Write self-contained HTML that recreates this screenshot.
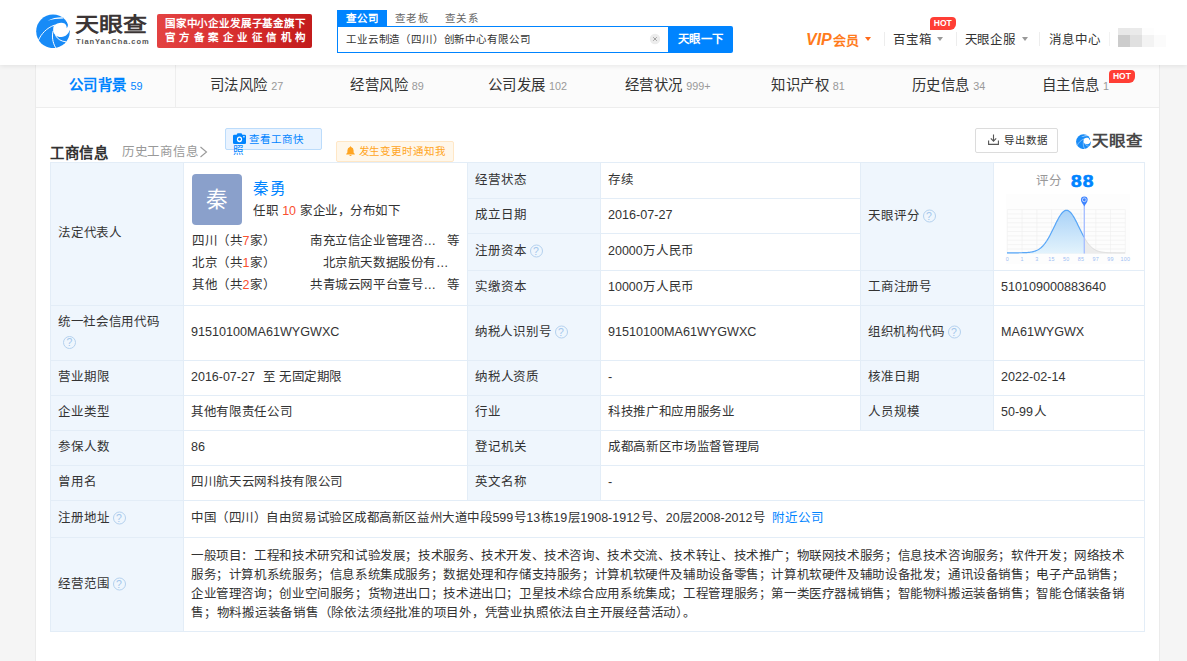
<!DOCTYPE html>
<html lang="zh-CN"><head>
<meta charset="utf-8">
<title>天眼查</title>
<style>
*{box-sizing:border-box;margin:0;padding:0}
html,body{width:1187px;height:661px;overflow:hidden}
body{background:#f5f5f5;font-family:"Liberation Sans",sans-serif;font-size:12.6px;color:#333;position:relative;line-height:1}
.abs,.abs>*{position:absolute}
.t{position:absolute;white-space:nowrap;line-height:1;transform:translateY(-50%)}
.j{display:inline-block;white-space:nowrap;text-align:justify;text-align-last:justify;vertical-align:baseline}
.blue{color:#0084ff}
.red{color:#f9502f}
.g9{color:#999}
/* header */
#hdr{position:absolute;left:0;top:0;width:1187px;height:65px;background:#fff;box-shadow:0 1px 5px rgba(0,0,0,.085);z-index:5}
#hdr>*{position:absolute}
.badge{left:157px;top:14px;width:155px;height:34px;border-radius:2px;background:linear-gradient(100deg,#e44343 0%,#d62c2c 55%,#c21b1b 100%);color:#fff;font-weight:bold}
.badge>span{position:absolute;left:8px}
.stab{top:10px;height:16px;font-size:10.8px;line-height:16px;color:#666}
.sep{top:32px;width:1px;height:14px;background:#ededed}
.nav{font-size:12.6px;color:#333}
.tri{width:0;height:0;border-left:3.5px solid transparent;border-right:3.5px solid transparent;border-top:4.5px solid #999}
.hot{background:#ff3e35;color:#fff;font-weight:bold;font-size:8.5px;line-height:12.5px;text-align:center;border-radius:4px 4px 6px 0;letter-spacing:0}
/* main */
#main{position:absolute;left:35px;top:65px;width:1125px;height:596px;background:#fff;border-left:1px solid #ebebeb;border-right:1px solid #ebebeb}
#tabs{position:absolute;left:36px;top:65px;width:1123px;height:43px;background:#fbfbfb;border-bottom:1px solid #ededed;display:flex}
.tab{flex:0 0 12.5%;height:42px;display:flex;align-items:center;justify-content:center;font-size:14.4px;color:#333;white-space:nowrap;position:relative;padding-bottom:1px}
.tab .n{font-size:10.8px;color:#999;margin-left:4px;position:relative;top:1px}
.tab.on{color:#0084ff;font-weight:bold;border-right:1px solid #eee}
.tab.on .n{color:#0084ff;font-weight:normal}

/* section header */
.btn{position:absolute;border-radius:2px}
/* table */
#tb{position:absolute;left:50px;top:162px;width:1095px;height:470px;border-right:1px solid #e3edf7;border-bottom:1px solid #e3edf7}
.c{position:absolute;border-left:1px solid #e3edf7;border-top:1px solid #e3edf7;background:#fff}
.c.l{background:#eff6fd}
.c>.t{left:7px;top:calc(50% - 1px)}
.q{display:inline-block;width:13px;height:13px;border:1px solid #b4d1ee;border-radius:50%;color:#a3c6ec;font-size:10.5px;line-height:11px;text-align:center;vertical-align:top;margin-left:4px;position:relative;top:0}
</style>
</head>
<body>
<!-- ================= HEADER ================= -->
<div id="hdr">
  <svg style="left:36px;top:14px" width="34" height="34" viewBox="0 0 34 34">
    <circle cx="17" cy="17.3" r="16.8" fill="#188bf7"></circle>
    <path d="M17.9 11.6C20.5 9.2 25.6 7.7 28.6 9.5C30.1 10.6 30.9 12.3 30.6 14.2C32.3 12.6 32.4 9.8 30.4 7.2L36 5.5V16.6L33.6 16.2C32.6 19.7 29.8 22.7 25.4 23C22.9 23.1 21 22.5 19.8 21.5C18.4 20.2 17.5 18.8 17.3 17.3C17 15 17.2 13 17.9 11.6Z" fill="#fff"></path>
    <path d="M11.6 6.7C16 4.3 21 3.2 26.6 3.3L27.2 4.5C21.4 4.5 16.2 5.3 11.6 6.7Z" fill="#fff"></path>
    <path d="M2.5 26.2C5.2 19.8 10.6 14 18.2 11.2" fill="none" stroke="#fff" stroke-width=".95" stroke-linecap="round"></path>
    <path d="M17.2 16.8C15.6 22 16.6 28.6 19.7 33.8" fill="none" stroke="#fff" stroke-width="1"></path>
    <path d="M19.4 21.3C21.4 25.2 25.4 27.4 30.4 27.9" fill="none" stroke="#fff" stroke-width=".95"></path>
  </svg>
  <div class="t" style="left:75px;top:24.5px;font-size:24px;font-weight:bold;color:#3b3535;transform:translateY(-50%) scaleY(.86)"><span class="j" style="width: 72px;">天眼查</span></div>
  <div class="t" style="left:76px;top:42px;font-size:7.5px;font-weight:bold;color:#555;letter-spacing:.95px">TianYanCha.com</div>
  <div class="badge">
    <span class="t" style="top:9.5px;font-size:10.8px"><span class="j" style="width: 140px; font-size: 10.49px;">国家中小企业发展子基金旗下</span></span>
    <span class="t" style="top:24px;font-size:10.8px"><span class="j" style="width: 140px; font-size: 10.49px;">官方备案企业征信机构</span></span>
  </div>
  <!-- search -->
  <div class="stab" style="left:337px;width:50px;background:#0084ff;color:#fff;font-weight:bold;text-align:center"><span class="j" style="width: 32.5px; font-size: 10.49px;">查公司</span></div>
  <div class="stab" style="left:395px"><span class="j" style="width: 32.5px; font-size: 10.49px;">查老板</span></div>
  <div class="stab" style="left:445px"><span class="j" style="width: 32.5px; font-size: 10.49px;">查关系</span></div>
  <div style="left:337px;top:26px;width:332px;height:27px;border:1px solid #0084ff;background:#fff"></div>
  <div class="t" style="left:346px;top:39.5px;font-size:10.8px;color:#333"><span class="j" style="width: 183.5px; font-size: 10.49px;">工业云制造（四川）创新中心有限公司</span></div>
  <svg style="left:649px;top:33px" width="12" height="12" viewBox="0 0 12 12"><circle cx="6" cy="6" r="5.2" fill="#ececec"></circle><path d="M4.2 4.2L7.8 7.8M7.8 4.2L4.2 7.8" stroke="#999" stroke-width=".9"></path></svg>
  <div style="left:668px;top:26px;width:65px;height:27px;background:#0084ff;border-radius:0 2px 2px 0"></div>
  <div class="t" style="left:677.5px;top:39.5px;font-size:11.4px;color:#fff;font-weight:bold"><span class="j" style="width: 45.5px;">天眼一下</span></div>
  <!-- right nav -->
  <div class="t" style="left:806px;top:39.5px;color:#ff7b1c;font-weight:bold;font-size:12.6px"><i style="font-size:16px;margin-right:1.5px">VIP</i><span class="j" style="font-size: 13px; width: 26px;">会员</span></div>
  <div class="tri" style="left:865px;top:37px;border-top-color:#ff6a1a"></div>
  <div class="sep" style="left:884px"></div>
  <div class="t nav" style="left:893px;top:39.5px"><span class="j" style="width: 37.75px; font-size: 12.49px;">百宝箱</span></div>
  <div class="tri" style="left:937px;top:37px"></div>
  <div class="hot" style="left:930px;top:17px;width:25.5px;height:12.5px">HOT</div>
  <div class="sep" style="left:956px"></div>
  <div class="t nav" style="left:964.5px;top:39.5px"><span class="j" style="width: 50.5px; font-size: 12.49px;">天眼企服</span></div>
  <div class="tri" style="left:1021.5px;top:37px"></div>
  <div class="sep" style="left:1039px"></div>
  <div class="t nav" style="left:1049px;top:39.5px"><span class="j" style="width: 50.5px; font-size: 12.49px;">消息中心</span></div>
  <div class="sep" style="left:1109px;background:#f2f2f2"></div>
  <!-- blurred avatar mosaic -->
  <div style="left:1118px;top:28px;width:12px;height:7px;background:#e8e8e8"></div>
  <div style="left:1130px;top:28px;width:12px;height:7px;background:#eaeaea"></div>
  <div style="left:1142px;top:28px;width:12px;height:7px;background:#fdfdfd"></div>
  <div style="left:1118px;top:35px;width:12px;height:12px;background:#cccccc"></div>
  <div style="left:1130px;top:35px;width:12px;height:12px;background:#e0e0e0"></div>
  <div style="left:1142px;top:35px;width:12px;height:12px;background:#f3f3f3"></div>
  <div style="left:1154px;top:35px;width:12px;height:12px;background:#fbfbfb"></div>
</div>

<!-- ================= MAIN ================= -->
<div id="main"></div>
<div id="tabs">
  <div class="tab on"><span class="j" style="width: 57.5px;">公司背景</span><span class="n">59</span></div>
  <div class="tab"><span class="j" style="width: 57.5px;">司法风险</span><span class="n">27</span></div>
  <div class="tab"><span class="j" style="width: 57.5px;">经营风险</span><span class="n">89</span></div>
  <div class="tab"><span class="j" style="width: 57.5px;">公司发展</span><span class="n">102</span></div>
  <div class="tab"><span class="j" style="width: 57.5px;">经营状况</span><span class="n">999+</span></div>
  <div class="tab"><span class="j" style="width: 57.5px;">知识产权</span><span class="n">81</span></div>
  <div class="tab"><span class="j" style="width: 57.5px;">历史信息</span><span class="n">34</span></div>
  <div class="tab" style="padding-right:27px"><span class="j" style="width: 57.5px;">自主信息</span><span class="n">1</span><div class="hot" style="position:absolute;left:90px;top:5px;width:26.5px;height:12.5px">HOT</div></div>
</div>


<!-- ================= SECTION HEADER ================= -->
<div class="t" style="left:50px;top:152.5px;font-size:14.4px;font-weight:bold;color:#333"><span class="j" style="width: 57.5px;">工商信息</span></div>
<div class="t g9" style="left:122px;top:152px;font-size:12.6px"><span class="j" style="width: 75.5px; font-size: 12.49px;">历史工商信息</span></div>
<svg style="position:absolute;left:199px;top:146px" width="9" height="12" viewBox="0 0 9 12"><path d="M1.5 1L7.5 6L1.5 11" fill="none" stroke="#999" stroke-width="1.1"></path></svg>
<div class="btn" style="left:225px;top:128px;width:97px;height:22px;background:#e9f3ff;border:1px solid #bcdcfb"></div>
<svg style="position:absolute;left:233px;top:133px" width="13" height="11" viewBox="0 0 13 10" preserveAspectRatio="none"><path d="M1.2 1.6H3.6L4.5 0.3H8.5L9.4 1.6H11.8Q13 1.6 13 2.8V8.8Q13 10 11.8 10H1.2Q0 10 0 8.8V2.8Q0 1.6 1.2 1.6Z" fill="#0084ff"></path><circle cx="6.5" cy="5.7" r="2.6" fill="#fff"></circle><circle cx="6.5" cy="5.7" r="1.3" fill="#0084ff"></circle><rect x="10.2" y="2.8" width="1.4" height="1.2" fill="#fff"></rect></svg>
<div class="t blue" style="left:249px;top:140px;font-size:10.8px"><span class="j" style="width: 54px; font-size: 10.49px;">查看工商快</span></div>
<div class="t blue" style="left:233px;top:151.3px;font-size:10.8px"><span class="j" style="width: 10.75px; font-size: 10.49px;">照</span></div>
<div class="btn" style="left:336px;top:141px;width:118px;height:21px;background:#fff7ea;border:1px solid #ffe7c6"></div>
<svg style="position:absolute;left:345.5px;top:146px" width="9" height="10" viewBox="0 0 9 10"><path d="M4.5 0.2Q5.1 0.2 5.1 0.9Q7.6 1.5 7.6 4.4V6.6L8.8 7.9V8.4H0.2V7.9L1.4 6.6V4.4Q1.4 1.5 3.9 0.9Q3.9 0.2 4.5 0.2Z" fill="#ffa522"></path><path d="M3.3 8.9H5.7Q5.5 10 4.5 10Q3.5 10 3.3 8.9Z" fill="#ffa522"></path></svg>
<div class="t" style="left:358.5px;top:151.5px;font-size:10.8px;color:#ffa522"><span class="j" style="width: 86.5px; font-size: 10.49px;">发生变更时通知我</span></div>
<div class="btn" style="left:975px;top:128px;width:83px;height:25px;background:#fff;border:1px solid #dcdcdc"></div>
<svg style="position:absolute;left:988px;top:134px" width="11" height="11" viewBox="0 0 11 11"><path d="M5.5 0.5V7M2.8 4.4L5.5 7.1L8.2 4.4" fill="none" stroke="#555" stroke-width="1.1"></path><path d="M0.6 6.5V10.4H10.4V6.5" fill="none" stroke="#555" stroke-width="1.1"></path></svg>
<div class="t" style="left:1003.5px;top:140.5px;font-size:10.8px;color:#333"><span class="j" style="width: 43.25px; font-size: 10.49px;">导出数据</span></div>
<svg style="position:absolute;left:1076px;top:133.5px" width="15" height="15" viewBox="0 0 34 34">
    <circle cx="17" cy="17.3" r="16.8" fill="#188bf7"></circle>
    <path d="M17.9 11.6C20.5 9.2 25.6 7.7 28.6 9.5C30.1 10.6 30.9 12.3 30.6 14.2C32.3 12.6 32.4 9.8 30.4 7.2L36 5.5V16.6L33.6 16.2C32.6 19.7 29.8 22.7 25.4 23C22.9 23.1 21 22.5 19.8 21.5C18.4 20.2 17.5 18.8 17.3 17.3C17 15 17.2 13 17.9 11.6Z" fill="#fff"></path>
    <path d="M11.6 6.7C16 4.3 21 3.2 26.6 3.3L27.2 4.5C21.4 4.5 16.2 5.3 11.6 6.7Z" fill="#fff"></path>
    <path d="M2.5 26.2C5.2 19.8 10.6 14 18.2 11.2" fill="none" stroke="#fff" stroke-width=".95" stroke-linecap="round"></path>
    <path d="M17.2 16.8C15.6 22 16.6 28.6 19.7 33.8" fill="none" stroke="#fff" stroke-width="1"></path>
    <path d="M19.4 21.3C21.4 25.2 25.4 27.4 30.4 27.9" fill="none" stroke="#fff" stroke-width=".95"></path>
</svg>
<div class="t" style="left:1091.5px;top:141px;font-size:16.7px;font-weight:bold;color:#484848;transform:translateY(-50%) scaleY(.9)"><span class="j" style="width: 50px; font-size: 16.49px;">天眼查</span></div>

<!-- ================= TABLE ================= -->
<div id="tb">
<div class="c l" style="left:0px;top:0px;width:133px;height:143px"><div class="t"><span class="j" style="width: 63px; font-size: 12.49px;">法定代表人</span></div></div>
<div class="c" style="left:133px;top:0px;width:284px;height:143px">
<div style="position:absolute;left:8px;top:11px;width:50px;height:51px;border-radius:4px;background:#8aa0cb"></div>
<div class="t" style="left:22px;top:37px;font-size:21.6px;color:#fff"><span class="j" style="width: 21.5px; font-size: 21.49px;">秦</span></div>
<div class="t blue" style="left:69px;top:26.3px;font-size:15.8px"><span class="j" style="width: 31.5px; font-size: 15.49px;">秦勇</span></div>
<div class="t" style="left:69px;top:47.6px"><span class="j" style="width: 147px; font-size: 12.49px;">任职 <span class="red">10</span> 家企业，分布如下</span></div>
<div class="t" style="left:8px;top:78px"><span class="j" style="width: 82.5px; font-size: 12.49px;">四川（共<span class="red">7</span>家）</span></div>
<div class="t" style="left:126px;top:78px"><span class="j" style="width: 126px; font-size: 12.49px;">南充立信企业管理咨…</span></div>
<div class="t" style="left:263px;top:78px"><span class="j" style="width: 12.5px; font-size: 12.49px;">等</span></div>
<div class="t" style="left:8px;top:100px"><span class="j" style="width: 82.5px; font-size: 12.49px;">北京（共<span class="red">1</span>家）</span></div>
<div class="t" style="left:138.5px;top:100px"><span class="j" style="width: 126px; font-size: 12.49px;">北京航天数据股份有…</span></div>
<div class="t" style="left:8px;top:122.1px"><span class="j" style="width: 82.5px; font-size: 12.49px;">其他（共<span class="red">2</span>家）</span></div>
<div class="t" style="left:126px;top:122.1px"><span class="j" style="width: 126px; font-size: 12.49px;">共青城云网平台壹号…</span></div>
<div class="t" style="left:263px;top:122.1px"><span class="j" style="width: 12.5px; font-size: 12.49px;">等</span></div>
</div>
<div class="c l" style="left:417px;top:0px;width:133px;height:36px"><div class="t"><span class="j" style="width: 50.5px; font-size: 12.49px;">经营状态</span></div></div>
<div class="c" style="left:550px;top:0px;width:260px;height:36px"><div class="t"><span class="j" style="width: 25.25px; font-size: 12.49px;">存续</span></div></div>
<div class="c l" style="left:417px;top:36px;width:133px;height:35px"><div class="t"><span class="j" style="width: 50.5px; font-size: 12.49px;">成立日期</span></div></div>
<div class="c" style="left:550px;top:36px;width:260px;height:35px"><div class="t">2016-07-27</div></div>
<div class="c l" style="left:417px;top:71px;width:133px;height:37px"><div class="t"><span class="j" style="width: 50.5px; font-size: 12.49px;">注册资本</span><span class="q">?</span></div></div>
<div class="c" style="left:550px;top:71px;width:260px;height:37px"><div class="t"><span class="j" style="width: 85.5px; font-size: 12.49px;">20000万人民币</span></div></div>
<div class="c l" style="left:417px;top:108px;width:133px;height:35px"><div class="t"><span class="j" style="width: 50.5px; font-size: 12.49px;">实缴资本</span></div></div>
<div class="c" style="left:550px;top:108px;width:260px;height:35px"><div class="t"><span class="j" style="width: 85.5px; font-size: 12.49px;">10000万人民币</span></div></div>
<div class="c l" style="left:810px;top:0px;width:133px;height:108px"><div class="t"><span class="j" style="width: 50.5px; font-size: 12.49px;">天眼评分</span><span class="q">?</span></div></div>
<div class="c" style="left:943px;top:0px;width:151px;height:108px"><svg style="position:absolute;left:0;top:0" width="150" height="107" viewBox="0 0 150 107">
<defs><linearGradient id="gb" x1="0" y1="0" x2="0" y2="1"><stop offset="0" stop-color="#a9d2f8"></stop><stop offset="1" stop-color="#e3f3fc"></stop></linearGradient></defs>
<rect x="12.0" y="31.0" width="124.0" height="70.0" fill="#fdfdfd"></rect>
<path d="M13.40 46.60V90.40M28.14 46.60V90.40M42.88 46.60V90.40M57.61 46.60V90.40M72.35 46.60V90.40M87.09 46.60V90.40M101.83 46.60V90.40M116.56 46.60V90.40M131.30 46.60V90.40M13.40 46.60H131.30M13.40 50.98H131.30M13.40 55.36H131.30M13.40 59.74H131.30M13.40 64.12H131.30M13.40 68.50H131.30M13.40 72.88H131.30M13.40 77.26H131.30M13.40 81.64H131.30M13.40 86.02H131.30M13.40 90.40H131.30" stroke="#efefef" stroke-width=".6" fill="none"></path>
<path d="M90.00 90.40 L90.00 74.10 L90.50 74.98 L91.00 75.83 L91.50 76.66 L92.00 77.46 L92.50 78.23 L93.00 78.96 L93.50 79.67 L94.00 80.35 L94.50 80.99 L95.00 81.61 L95.50 82.19 L96.00 82.75 L96.50 83.27 L97.00 83.76 L97.50 84.23 L98.00 84.67 L98.50 85.08 L99.00 85.47 L99.50 85.83 L100.00 86.17 L100.50 86.48 L101.00 86.77 L101.50 87.04 L102.00 87.29 L102.50 87.52 L103.00 87.74 L103.50 87.93 L104.00 88.11 L104.50 88.28 L105.00 88.43 L105.50 88.57 L106.00 88.69 L106.50 88.81 L107.00 88.91 L107.50 89.01 L108.00 89.09 L108.50 89.17 L109.00 89.24 L109.50 89.30 L110.00 89.36 L110.50 89.41 L111.00 89.46 L111.50 89.50 L112.00 89.53 L112.50 89.57 L113.00 89.59 L113.50 89.62 L114.00 89.64 L114.50 89.66 L115.00 89.68 L115.50 89.70 L116.00 89.71 L116.50 89.72 L117.00 89.73 L117.50 89.74 L118.00 89.75 L118.50 89.76 L119.00 89.76 L119.50 89.77 L120.00 89.77 L120.50 89.78 L121.00 89.78 L121.50 89.78 L122.00 89.79 L122.50 89.79 L123.00 89.79 L123.50 89.79 L124.00 89.79 L124.50 89.79 L125.00 89.79 L125.50 89.80 L126.00 89.80 L126.50 89.80 L127.00 89.80 L127.50 89.80 L128.00 89.80 L128.50 89.80 L129.00 89.80 L129.50 89.80 L130.00 89.80 L130.50 89.80 L131.00 89.80 L131.00 90.40Z" fill="#ececec"></path>
<path d="M90.00 74.10 L90.50 74.98 L91.00 75.83 L91.50 76.66 L92.00 77.46 L92.50 78.23 L93.00 78.96 L93.50 79.67 L94.00 80.35 L94.50 80.99 L95.00 81.61 L95.50 82.19 L96.00 82.75 L96.50 83.27 L97.00 83.76 L97.50 84.23 L98.00 84.67 L98.50 85.08 L99.00 85.47 L99.50 85.83 L100.00 86.17 L100.50 86.48 L101.00 86.77 L101.50 87.04 L102.00 87.29 L102.50 87.52 L103.00 87.74 L103.50 87.93 L104.00 88.11 L104.50 88.28 L105.00 88.43 L105.50 88.57 L106.00 88.69 L106.50 88.81 L107.00 88.91 L107.50 89.01 L108.00 89.09 L108.50 89.17 L109.00 89.24 L109.50 89.30 L110.00 89.36 L110.50 89.41 L111.00 89.46 L111.50 89.50 L112.00 89.53 L112.50 89.57 L113.00 89.59 L113.50 89.62 L114.00 89.64 L114.50 89.66 L115.00 89.68 L115.50 89.70 L116.00 89.71 L116.50 89.72 L117.00 89.73 L117.50 89.74 L118.00 89.75 L118.50 89.76 L119.00 89.76 L119.50 89.77 L120.00 89.77 L120.50 89.78 L121.00 89.78 L121.50 89.78 L122.00 89.79 L122.50 89.79 L123.00 89.79 L123.50 89.79 L124.00 89.79 L124.50 89.79 L125.00 89.79 L125.50 89.80 L126.00 89.80 L126.50 89.80 L127.00 89.80 L127.50 89.80 L128.00 89.80 L128.50 89.80 L129.00 89.80 L129.50 89.80 L130.00 89.80 L130.50 89.80 L131.00 89.80" fill="none" stroke="#dcdcdc" stroke-width="1"></path>
<path d="M13.00 90.40 L13.00 89.80 L13.50 89.80 L14.00 89.80 L14.50 89.80 L15.00 89.80 L15.50 89.80 L16.00 89.80 L16.50 89.80 L17.00 89.80 L17.50 89.80 L18.00 89.80 L18.50 89.80 L19.00 89.80 L19.50 89.80 L20.00 89.79 L20.50 89.79 L21.00 89.79 L21.50 89.79 L22.00 89.79 L22.50 89.79 L23.00 89.79 L23.50 89.78 L24.00 89.78 L24.50 89.78 L25.00 89.77 L25.50 89.77 L26.00 89.76 L26.50 89.76 L27.00 89.75 L27.50 89.74 L28.00 89.73 L28.50 89.72 L29.00 89.71 L29.50 89.70 L30.00 89.68 L30.50 89.66 L31.00 89.64 L31.50 89.62 L32.00 89.59 L32.50 89.57 L33.00 89.53 L33.50 89.50 L34.00 89.46 L34.50 89.41 L35.00 89.36 L35.50 89.30 L36.00 89.24 L36.50 89.17 L37.00 89.09 L37.50 89.01 L38.00 88.91 L38.50 88.81 L39.00 88.69 L39.50 88.57 L40.00 88.43 L40.50 88.28 L41.00 88.11 L41.50 87.93 L42.00 87.74 L42.50 87.52 L43.00 87.29 L43.50 87.04 L44.00 86.77 L44.50 86.48 L45.00 86.17 L45.50 85.83 L46.00 85.47 L46.50 85.08 L47.00 84.67 L47.50 84.23 L48.00 83.76 L48.50 83.27 L49.00 82.75 L49.50 82.19 L50.00 81.61 L50.50 80.99 L51.00 80.35 L51.50 79.67 L52.00 78.96 L52.50 78.23 L53.00 77.46 L53.50 76.66 L54.00 75.83 L54.50 74.98 L55.00 74.10 L55.50 73.19 L56.00 72.27 L56.50 71.31 L57.00 70.34 L57.50 69.35 L58.00 68.35 L58.50 67.33 L59.00 66.30 L59.50 65.27 L60.00 64.23 L60.50 63.19 L61.00 62.15 L61.50 61.12 L62.00 60.10 L62.50 59.10 L63.00 58.11 L63.50 57.14 L64.00 56.20 L64.50 55.29 L65.00 54.40 L65.50 53.56 L66.00 52.76 L66.50 52.00 L67.00 51.28 L67.50 50.62 L68.00 50.01 L68.50 49.45 L69.00 48.96 L69.50 48.53 L70.00 48.16 L70.50 47.85 L71.00 47.61 L71.50 47.44 L72.00 47.33 L72.50 47.30 L73.00 47.33 L73.50 47.44 L74.00 47.61 L74.50 47.85 L75.00 48.16 L75.50 48.53 L76.00 48.96 L76.50 49.45 L77.00 50.01 L77.50 50.62 L78.00 51.28 L78.50 52.00 L79.00 52.76 L79.50 53.56 L80.00 54.40 L80.50 55.29 L81.00 56.20 L81.50 57.14 L82.00 58.11 L82.50 59.10 L83.00 60.10 L83.50 61.12 L84.00 62.15 L84.50 63.19 L85.00 64.23 L85.50 65.27 L86.00 66.30 L86.50 67.33 L87.00 68.35 L87.50 69.35 L88.00 70.34 L88.50 71.31 L89.00 72.27 L89.50 73.19 L90.00 74.10 L90.00 90.40Z" fill="url(#gb)"></path>
<path d="M13.00 89.80 L13.50 89.80 L14.00 89.80 L14.50 89.80 L15.00 89.80 L15.50 89.80 L16.00 89.80 L16.50 89.80 L17.00 89.80 L17.50 89.80 L18.00 89.80 L18.50 89.80 L19.00 89.80 L19.50 89.80 L20.00 89.79 L20.50 89.79 L21.00 89.79 L21.50 89.79 L22.00 89.79 L22.50 89.79 L23.00 89.79 L23.50 89.78 L24.00 89.78 L24.50 89.78 L25.00 89.77 L25.50 89.77 L26.00 89.76 L26.50 89.76 L27.00 89.75 L27.50 89.74 L28.00 89.73 L28.50 89.72 L29.00 89.71 L29.50 89.70 L30.00 89.68 L30.50 89.66 L31.00 89.64 L31.50 89.62 L32.00 89.59 L32.50 89.57 L33.00 89.53 L33.50 89.50 L34.00 89.46 L34.50 89.41 L35.00 89.36 L35.50 89.30 L36.00 89.24 L36.50 89.17 L37.00 89.09 L37.50 89.01 L38.00 88.91 L38.50 88.81 L39.00 88.69 L39.50 88.57 L40.00 88.43 L40.50 88.28 L41.00 88.11 L41.50 87.93 L42.00 87.74 L42.50 87.52 L43.00 87.29 L43.50 87.04 L44.00 86.77 L44.50 86.48 L45.00 86.17 L45.50 85.83 L46.00 85.47 L46.50 85.08 L47.00 84.67 L47.50 84.23 L48.00 83.76 L48.50 83.27 L49.00 82.75 L49.50 82.19 L50.00 81.61 L50.50 80.99 L51.00 80.35 L51.50 79.67 L52.00 78.96 L52.50 78.23 L53.00 77.46 L53.50 76.66 L54.00 75.83 L54.50 74.98 L55.00 74.10 L55.50 73.19 L56.00 72.27 L56.50 71.31 L57.00 70.34 L57.50 69.35 L58.00 68.35 L58.50 67.33 L59.00 66.30 L59.50 65.27 L60.00 64.23 L60.50 63.19 L61.00 62.15 L61.50 61.12 L62.00 60.10 L62.50 59.10 L63.00 58.11 L63.50 57.14 L64.00 56.20 L64.50 55.29 L65.00 54.40 L65.50 53.56 L66.00 52.76 L66.50 52.00 L67.00 51.28 L67.50 50.62 L68.00 50.01 L68.50 49.45 L69.00 48.96 L69.50 48.53 L70.00 48.16 L70.50 47.85 L71.00 47.61 L71.50 47.44 L72.00 47.33 L72.50 47.30 L73.00 47.33 L73.50 47.44 L74.00 47.61 L74.50 47.85 L75.00 48.16 L75.50 48.53 L76.00 48.96 L76.50 49.45 L77.00 50.01 L77.50 50.62 L78.00 51.28 L78.50 52.00 L79.00 52.76 L79.50 53.56 L80.00 54.40 L80.50 55.29 L81.00 56.20 L81.50 57.14 L82.00 58.11 L82.50 59.10 L83.00 60.10 L83.50 61.12 L84.00 62.15 L84.50 63.19 L85.00 64.23 L85.50 65.27 L86.00 66.30 L86.50 67.33 L87.00 68.35 L87.50 69.35 L88.00 70.34 L88.50 71.31 L89.00 72.27 L89.50 73.19 L90.00 74.10" fill="none" stroke="#58a6f7" stroke-width="1.2"></path>
<path d="M90.30 42.00V90.40" stroke="#a9c0ff" stroke-width="1.4"></path>
<path d="M90.30 43.40C89.30 41.40 86.90 39.20 86.90 36.80A3.4 3.4 0 1 1 93.70 36.80C93.70 39.20 91.30 41.40 90.30 43.40Z" fill="#3d83ff"></path>
<circle cx="90.30" cy="36.80" r="1.9" fill="none" stroke="#dbe8ff" stroke-width=".8"></circle>
<g font-family="Liberation Sans, sans-serif" font-size="5.4" letter-spacing=".25" fill="#9dbdf2" text-anchor="middle"><text x="13.40" y="98.00">0</text><text x="28.14" y="98.00">1</text><text x="42.88" y="98.00">3</text><text x="57.61" y="98.00">15</text><text x="72.35" y="98.00">50</text><text x="87.09" y="98.00">85</text><text x="101.83" y="98.00">97</text><text x="116.56" y="98.00">99</text><text x="131.30" y="98.00">100</text></g>
</svg>
<div class="t g9" style="left:42px;top:18px;font-size:12.6px"><span class="j" style="width: 25.25px; font-size: 12.49px;">评分</span></div>
<div class="t blue" style="left:76.5px;top:19px;font-size:16px;font-weight:bold;letter-spacing:.8px;-webkit-text-stroke:.6px #0084ff;transform:translateY(-50%) scaleX(1.2);transform-origin:0 50%">88</div>
</div>
<div class="c l" style="left:810px;top:108px;width:133px;height:35px"><div class="t"><span class="j" style="width: 63px; font-size: 12.49px;">工商注册号</span></div></div>
<div class="c" style="left:943px;top:108px;width:151px;height:35px"><div class="t">510109000883640</div></div>
<div class="c l" style="left:0px;top:143px;width:133px;height:55px"><div class="t" style="top:15.5px"><span class="j" style="width: 100.75px; font-size: 12.49px;">统一社会信用代码</span></div><span class="q" style="position:absolute;left:12px;top:29.7px;margin:0">?</span></div>
<div class="c" style="left:133px;top:143px;width:284px;height:55px"><div class="t">91510100MA61WYGWXC</div></div>
<div class="c l" style="left:417px;top:143px;width:133px;height:55px"><div class="t"><span class="j" style="width: 75.5px; font-size: 12.49px;">纳税人识别号</span><span class="q">?</span></div></div>
<div class="c" style="left:550px;top:143px;width:260px;height:55px"><div class="t">91510100MA61WYGWXC</div></div>
<div class="c l" style="left:810px;top:143px;width:133px;height:55px"><div class="t"><span class="j" style="width: 75.5px; font-size: 12.49px;">组织机构代码</span><span class="q">?</span></div></div>
<div class="c" style="left:943px;top:143px;width:151px;height:55px"><div class="t">MA61WYGWX</div></div>
<div class="c l" style="left:0px;top:198px;width:133px;height:35px"><div class="t"><span class="j" style="width: 50.5px; font-size: 12.49px;">营业期限</span></div></div>
<div class="c" style="left:133px;top:198px;width:284px;height:35px"><div class="t"><span class="j" style="width: 150.5px; font-size: 12.49px;">2016-07-27&nbsp; 至 无固定期限</span></div></div>
<div class="c l" style="left:417px;top:198px;width:133px;height:35px"><div class="t"><span class="j" style="width: 63px; font-size: 12.49px;">纳税人资质</span></div></div>
<div class="c" style="left:550px;top:198px;width:260px;height:35px"><div class="t">-</div></div>
<div class="c l" style="left:810px;top:198px;width:133px;height:35px"><div class="t"><span class="j" style="width: 50.5px; font-size: 12.49px;">核准日期</span></div></div>
<div class="c" style="left:943px;top:198px;width:151px;height:35px"><div class="t">2022-02-14</div></div>
<div class="c l" style="left:0px;top:233px;width:133px;height:35px"><div class="t"><span class="j" style="width: 50.5px; font-size: 12.49px;">企业类型</span></div></div>
<div class="c" style="left:133px;top:233px;width:284px;height:35px"><div class="t"><span class="j" style="width: 100.75px; font-size: 12.49px;">其他有限责任公司</span></div></div>
<div class="c l" style="left:417px;top:233px;width:133px;height:35px"><div class="t"><span class="j" style="width: 25.25px; font-size: 12.49px;">行业</span></div></div>
<div class="c" style="left:550px;top:233px;width:260px;height:35px"><div class="t"><span class="j" style="width: 126px; font-size: 12.49px;">科技推广和应用服务业</span></div></div>
<div class="c l" style="left:810px;top:233px;width:133px;height:35px"><div class="t"><span class="j" style="width: 50.5px; font-size: 12.49px;">人员规模</span></div></div>
<div class="c" style="left:943px;top:233px;width:151px;height:35px"><div class="t"><span class="j" style="width: 44.75px; font-size: 12.49px;">50-99人</span></div></div>
<div class="c l" style="left:0px;top:268px;width:133px;height:35px"><div class="t"><span class="j" style="width: 50.5px; font-size: 12.49px;">参保人数</span></div></div>
<div class="c" style="left:133px;top:268px;width:284px;height:35px"><div class="t">86</div></div>
<div class="c l" style="left:417px;top:268px;width:133px;height:35px"><div class="t"><span class="j" style="width: 50.5px; font-size: 12.49px;">登记机关</span></div></div>
<div class="c" style="left:550px;top:268px;width:544px;height:35px"><div class="t"><span class="j" style="width: 151.25px; font-size: 12.49px;">成都高新区市场监督管理局</span></div></div>
<div class="c l" style="left:0px;top:303px;width:133px;height:35px"><div class="t"><span class="j" style="width: 37.75px; font-size: 12.49px;">曾用名</span></div></div>
<div class="c" style="left:133px;top:303px;width:284px;height:35px"><div class="t"><span class="j" style="width: 151.25px; font-size: 12.49px;">四川航天云网科技有限公司</span></div></div>
<div class="c l" style="left:417px;top:303px;width:133px;height:35px"><div class="t"><span class="j" style="width: 50.5px; font-size: 12.49px;">英文名称</span></div></div>
<div class="c" style="left:550px;top:303px;width:544px;height:35px"><div class="t">-</div></div>
<div class="c l" style="left:0px;top:338px;width:133px;height:37px"><div class="t"><span class="j" style="width: 50.5px; font-size: 12.49px;">注册地址</span><span class="q">?</span></div></div>
<div class="c" style="left:133px;top:338px;width:961px;height:37px"><div class="t"><span class="j" style="width: 574px; font-size: 12.49px;">中国（四川）自由贸易试验区成都高新区益州大道中段599号13栋19层1908-1912号、20层2008-2012号</span><span class="blue" style="margin-left:7px"><span class="j" style="width: 50.5px; font-size: 12.49px;">附近公司</span></span></div></div>
<div class="c l" style="left:0px;top:375px;width:133px;height:94px"><div class="t"><span class="j" style="width: 50.5px; font-size: 12.49px;">经营范围</span><span class="q">?</span></div></div>
<div class="c" style="left:133px;top:375px;width:961px;height:94px"><div class="t" style="top:17.5px"><span class="j" style="width: 933px; font-size: 12.49px;">一般项目：工程和技术研究和试验发展；技术服务、技术开发、技术咨询、技术交流、技术转让、技术推广；物联网技术服务；信息技术咨询服务；软件开发；网络技术</span></div><div class="t" style="top:36.5px"><span class="j" style="width: 933px; font-size: 12.49px;">服务；计算机系统服务；信息系统集成服务；数据处理和存储支持服务；计算机软硬件及辅助设备零售；计算机软硬件及辅助设备批发；通讯设备销售；电子产品销售；</span></div><div class="t" style="top:55.5px"><span class="j" style="width: 933px; font-size: 12.49px;">企业管理咨询；创业空间服务；货物进出口；技术进出口；卫星技术综合应用系统集成；工程管理服务；第一类医疗器械销售；智能物料搬运装备销售；智能仓储装备销</span></div><div class="t" style="top:74.5px"><span class="j" style="width: 504px; font-size: 12.49px;">售；物料搬运装备销售（除依法须经批准的项目外，凭营业执照依法自主开展经营活动）。</span></div></div>
</div>



</body></html>
